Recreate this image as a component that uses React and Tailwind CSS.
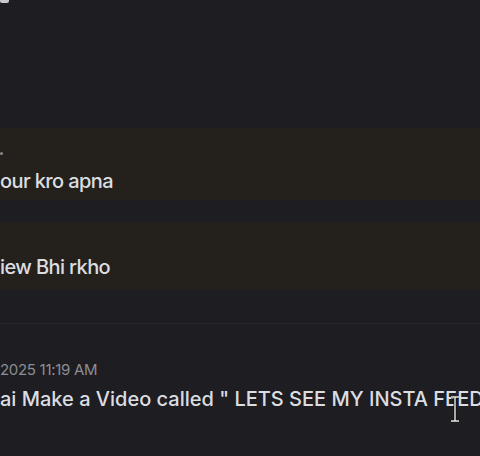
import React from 'react';

const font = { fontFamily: 'Inter, "Noto Sans", sans-serif' };

const App = () => {
  return (
    <div className="w-[480px] h-[456px] overflow-hidden bg-[#1d1d22] text-[#dcdde0] relative" style={font}>
      {/* tail of the previous message */}
      <div className="h-[128px] flex flex-col">
        <div className="h-[4px] w-[9px] bg-[#c8c8cc] rounded-b-[2px] -mt-[1px]" />
      </div>

      {/* highlighted message */}
      <div className="h-[72px] bg-[#24211d] flex flex-col">
        <div className="h-[3px] w-[3px] mt-[24px] bg-[#8a8a90] rounded-full" />
        <div className="mt-[13px] text-[20px] leading-[26px] font-medium tracking-[-0.6px]">our kro apna</div>
      </div>

      <div className="h-[22px]" />

      {/* highlighted message */}
      <div className="h-[68px] bg-[#24211d] flex flex-col justify-end pb-[10px]">
        <div className="text-[20px] leading-[26px] font-medium tracking-[-0.6px]">iew Bhi rkho</div>
      </div>

      <div className="h-[33px]" />
      <div className="h-px bg-[#26262c]" />

      {/* new message */}
      <div className="pt-[36px] flex flex-col">
        <div className="text-[15px] leading-[20px] text-[#8d8d93] tracking-[-0.3px]">2025 11:19 AM</div>
        <div className="mt-[6px] text-[20px] leading-[26px] font-medium tracking-[0px] whitespace-nowrap">
          ai Make a Video called " LETS SEE MY INSTA FEED
        </div>
      </div>

      {/* text cursor */}
      <svg className="absolute left-[449px] top-[396px]" width="12" height="26" viewBox="0 0 12 26">
        <path d="M2 1h8M6 1v24M2 25h8" stroke="#111" strokeWidth="3" fill="none" />
        <path d="M2 1h8M6 1v24M2 25h8" stroke="#e8e8e8" strokeWidth="1.4" fill="none" />
      </svg>
    </div>
  );
};

export default App;
